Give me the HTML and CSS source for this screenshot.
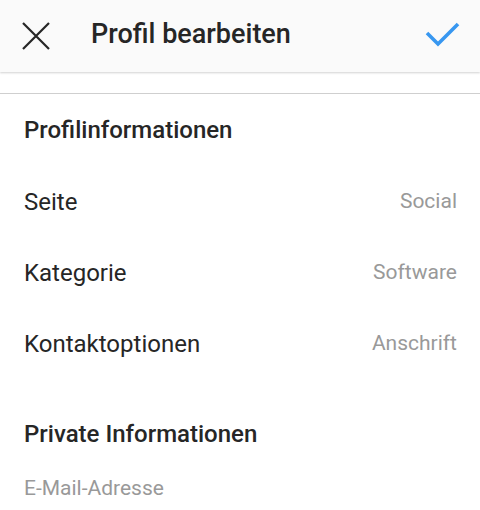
FILE: index.html
```html
<!DOCTYPE html>
<html lang="de">
<head>
  <meta charset="UTF-8">
  <title>Profil bearbeiten</title>
  <link rel="stylesheet" href="styles.css">
</head>
<body>
  <div class="topbar">
    <svg class="close" width="28" height="28" viewBox="0 0 28 28">
      <path d="M1 1 L27 27 M27 1 L1 27" stroke="#262626" stroke-width="2.2" fill="none"/>
    </svg>
    <h1>Profil bearbeiten</h1>
    <svg class="done" width="36" height="28" viewBox="0 0 36 28">
      <path d="M2 11 L13 22 L33 2" stroke="#3897f0" stroke-width="3.6" fill="none"/>
    </svg>
  </div>

  <div class="content">
    <h2 class="section-title">Profilinformationen</h2>
    <div class="row">
      <span class="label">Seite</span>
      <span class="value">Social</span>
    </div>
    <div class="row">
      <span class="label">Kategorie</span>
      <span class="value">Software</span>
    </div>
    <div class="row">
      <span class="label">Kontaktoptionen</span>
      <span class="value">Anschrift</span>
    </div>

    <h2 class="section-title private">Private Informationen</h2>
    <div class="field">E-Mail-Adresse</div>
  </div>
</body>
</html>
```

FILE: styles.css
```css
body {
  margin: 0;
  font-family: Roboto, "Liberation Sans", sans-serif;
  background: #fff;
  color: #262626;
  overflow: hidden;
}

.topbar {
  height: 72px;
  display: flex;
  align-items: center;
  background: #fafafa;
  box-shadow: 0 1px 2px rgba(0, 0, 0, 0.18);
  position: relative;
}

.topbar .close {
  margin-left: 22px;
}

.topbar h1 {
  margin: 0 0 4px 41px;
  flex: 1;
  font-size: 27px;
  font-weight: 500;
  line-height: 1;
}

.topbar .done {
  margin-right: 19px;
}

.content {
  margin-top: 21px;
  border-top: 1px solid #cfcfcf;
  padding: 0 23px 0 24px;
}

.section-title {
  margin: 0;
  height: 72px;
  display: flex;
  align-items: center;
  font-size: 24px;
  font-weight: 500;
  line-height: 1;
}

.section-title.private {
  margin-top: 19px;
}

.row {
  height: 71px;
  display: flex;
  align-items: center;
  justify-content: space-between;
}

.label {
  font-size: 24px;
  line-height: 1;
}

.value {
  font-size: 21px;
  line-height: 1;
  color: #999;
}

.field {
  font-size: 21px;
  line-height: 1;
  color: #999;
  padding-top: 8px;
}
```
